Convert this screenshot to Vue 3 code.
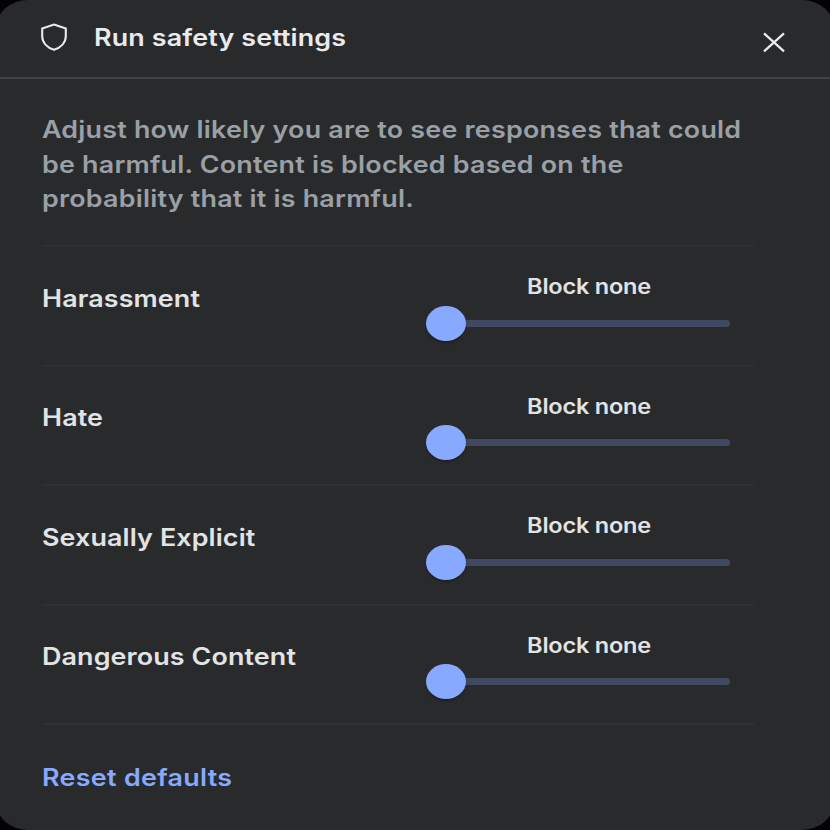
<template>
  <section class="panel" role="dialog" aria-labelledby="safety-title">
    <header class="header">
      <svg class="shield" viewBox="0 0 28 28" fill="none" aria-hidden="true">
        <path
          d="M14 1.6 L25.8 5.4 V13 C25.8 19.5 20.8 24.6 14 26.8 C7.2 24.6 2.2 19.5 2.2 13 V5.4 Z"
          stroke="currentColor"
          stroke-width="2.1"
        />
      </svg>
      <h2 id="safety-title" class="title">Run safety settings</h2>
      <button class="close" type="button" aria-label="Close">
        <svg viewBox="0 0 24 22" fill="none" aria-hidden="true">
          <path d="M2 2.4 L22 20.4 M22 2.4 L2 20.4" stroke="currentColor" stroke-width="2.3" />
        </svg>
      </button>
    </header>

    <div class="content">
      <p class="intro">
        Adjust how likely you are to see responses that could<br />
        be harmful. Content is blocked based on the<br />
        probability that it is harmful.
      </p>

      <div v-for="item in settings" :key="item.name" class="row">
        <span class="name">{{ item.name }}</span>
        <div class="control">
          <span class="value">{{ levels[item.level] }}</span>
          <div class="slider">
            <span class="thumb" :style="{ marginLeft: `${item.level * 66}px` }"></span>
          </div>
        </div>
      </div>

      <div class="footer">
        <button class="reset" type="button" @click="resetDefaults">Reset defaults</button>
      </div>
    </div>
  </section>
</template>

<script setup>
import { ref } from "vue";

const levels = ["Block none", "Block few", "Block some", "Block most"];

const defaults = [
  { name: "Harassment", level: 0 },
  { name: "Hate", level: 0 },
  { name: "Sexually Explicit", level: 0 },
  { name: "Dangerous Content", level: 0 },
];

const settings = ref(defaults.map((item) => ({ ...item })));

function resetDefaults() {
  settings.value = defaults.map((item) => ({ ...item }));
}
</script>

<style>
body {
  margin: 0;
  background: #030305;
  overflow: hidden;
}
</style>

<style scoped>
.panel {
  box-sizing: border-box;
  width: 838px;
  height: 830px;
  margin-left: -4px;
  padding: 0 4px;
  border-radius: 32px / 28px;
  background: #292a2c;
  color: #e2e3e5;
  font-family: Inter, "Liberation Sans", sans-serif;
  font-weight: 600;
  overflow: hidden;
}

button {
  padding: 0;
  border: 0;
  background: none;
  color: inherit;
  font: inherit;
}

/* wide letterforms */
.title,
.intro,
.name,
.reset {
  font-size: 24px;
  white-space: nowrap;
  transform: scaleX(1.12);
  transform-origin: left;
}

.header {
  box-sizing: border-box;
  display: flex;
  align-items: flex-start;
  height: 79px;
  margin: 0 -4px;
  padding: 0 48px 0 44px;
  border-bottom: 2px solid #434446;
  color: #e8eaed;
}

.shield {
  width: 28px;
  height: 28px;
  margin-top: 23px;
}

.title {
  margin: 22px 0 0 26px;
  line-height: 32px;
  font-weight: 600;
  letter-spacing: 0.12px;
}

.close {
  height: 22px;
  margin: 31px 0 0 auto;
}

.close svg {
  display: block;
  width: 24px;
  height: 22px;
}

.content {
  width: 712px;
  margin-left: 42px;
}

.intro {
  box-sizing: border-box;
  height: 166px;
  margin: 0;
  padding-top: 34.4px;
  color: #9aa0a6;
  line-height: 34.5px;
  letter-spacing: 0.19px;
}

.row {
  box-sizing: border-box;
  display: flex;
  justify-content: space-between;
  align-items: flex-start;
  height: 119.5px;
  padding-right: 24px;
  border-top: 2px solid #2f3032;
}

.name {
  margin-top: 34.6px;
  line-height: 34px;
  letter-spacing: 0.1px;
}

.control {
  display: flex;
  flex-direction: column;
  width: 304px;
  padding-top: 25px;
}

.value {
  padding-left: 22px;
  font-size: 21px;
  line-height: 30px;
  letter-spacing: -0.2px;
  text-align: center;
  transform: scaleX(1.12);
  transform-origin: 163px center;
}

.slider {
  display: flex;
  align-items: center;
  height: 35px;
  margin-top: 3.8px;
}

.slider::after {
  content: "";
  flex: 1;
  height: 7px;
  margin-left: -4px;
  border-radius: 0 4px 4px 0;
  background: #414962;
}

.thumb {
  z-index: 1;
  width: 40px;
  height: 35px;
  border-radius: 50%;
  background: #87a9ff;
  box-shadow: 0 2px 2px rgba(0, 0, 0, 0.25);
}

.footer {
  padding-top: 36.3px;
  border-top: 2px solid #2f3032;
}

.reset {
  display: block;
  color: #87a9ff;
  line-height: 34px;
  letter-spacing: 0.28px;
}
</style>
